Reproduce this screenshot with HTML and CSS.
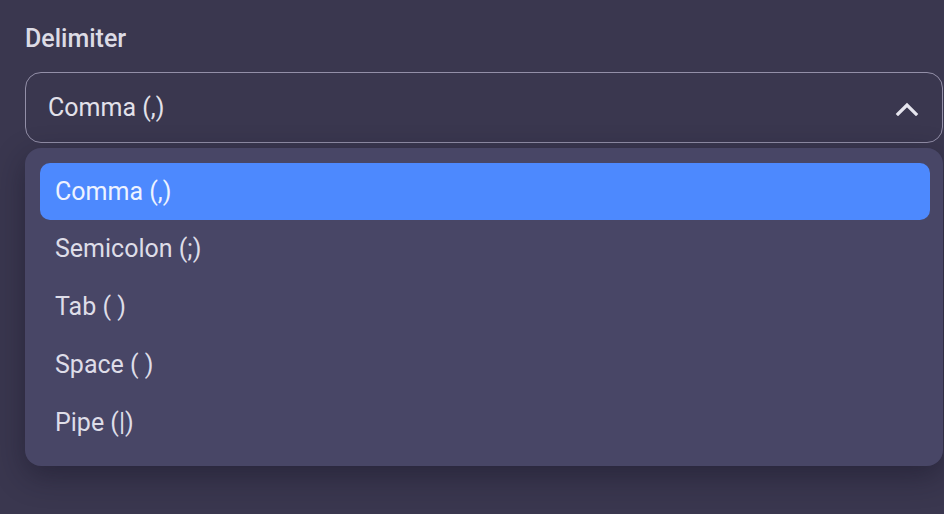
FILE: index.html
```html
<!DOCTYPE html>
<html>
<head>
<meta charset="utf-8">
<link rel="stylesheet" href="styles.css">
</head>
<body>
<div class="field">
  <div class="label">Delimiter</div>
  <div class="select-wrap">
    <div class="select">
      <span class="value">Comma (,)</span>
      <svg class="chev" width="24" height="14" viewBox="0 0 24 14"><polyline points="3,12 12,3 21,12" fill="none" stroke="#e6e5ee" stroke-width="3.2" stroke-linecap="square"/></svg>
    </div>
    <ul class="menu">
      <li class="opt selected">Comma (,)</li>
      <li class="opt">Semicolon (;)</li>
      <li class="opt">Tab (	)</li>
      <li class="opt">Space ( )</li>
      <li class="opt">Pipe (|)</li>
    </ul>
  </div>
</div>
</body>
</html>
```
FILE: styles.css
```css
html, body {
  margin: 0;
  padding: 0;
  width: 944px;
  height: 514px;
  overflow: hidden;
  background: #3a374f;
  font-family: Roboto, "Liberation Sans", sans-serif;
}
.field {
  padding: 23px 1px 0 25px;
}
.label {
  color: #dcdbe5;
  font-size: 25px;
  font-weight: 500;
  line-height: 32px;
  margin-bottom: 17px;
}
.select-wrap {
  position: relative;
}
.select {
  box-sizing: border-box;
  height: 71px;
  border: 1px solid #938fa8;
  border-radius: 16px;
  display: flex;
  align-items: center;
  justify-content: space-between;
  padding: 0 23px 0 22px;
  color: #e2e1ea;
  font-size: 25px;
}
.chev {
  display: block;
  margin-top: 2px;
}
.menu {
  position: absolute;
  left: 0;
  right: 0;
  top: 76px;
  margin: 0;
  list-style: none;
  background: #484666;
  border-radius: 16px;
  padding: 15px 13px 14px 15px;
  box-shadow: 0 10px 30px rgba(20, 18, 35, 0.45);
}
.opt {
  height: 58px;
  line-height: 58px;
  padding-left: 15px;
  color: #dedde8;
  font-size: 25px;
  border-radius: 10px;
}
.opt.selected {
  background: #4d89fe;
  color: #eef3ff;
  height: 57px;
  line-height: 57px;
}
```
